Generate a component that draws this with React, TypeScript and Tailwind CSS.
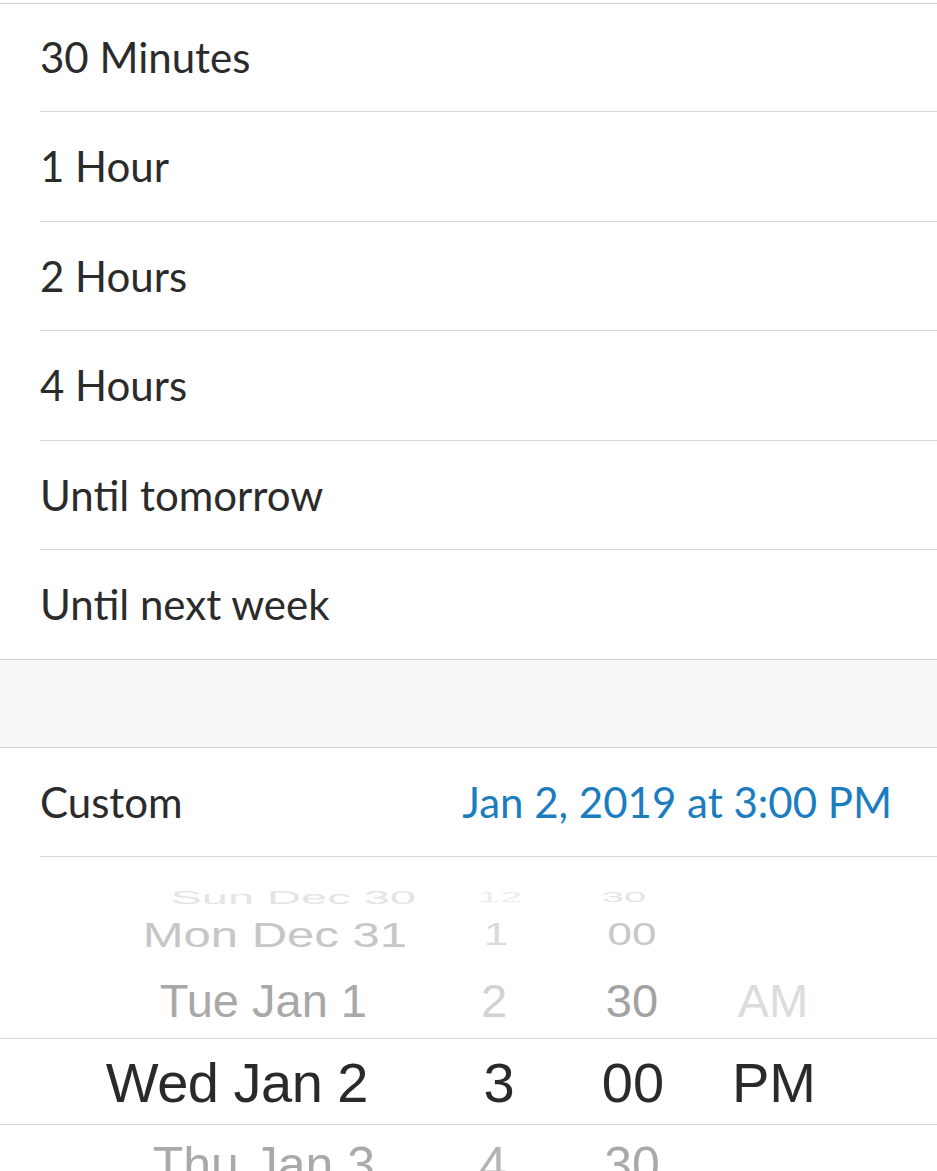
import React from "react"

const options = [
  { label: "30 Minutes", h: "h-[108px]" },
  { label: "1 Hour", h: "h-[110px]" },
  { label: "2 Hours", h: "h-[109px]" },
  { label: "4 Hours", h: "h-[110px]" },
  { label: "Until tomorrow", h: "h-[109px]" },
  { label: "Until next week", h: "h-[109px]" },
]

const lato = { fontFamily: "Lato, 'Open Sans', sans-serif" }
const helv = { fontFamily: "'Liberation Sans', Arial, sans-serif" }

export default function App() {
  return (
    <div className="w-[937px] h-[1171px] overflow-hidden bg-white" style={lato}>
      <div className="h-[3px] bg-white" />
      <div className="border-t border-[#cfcfcf]">
        {options.map((o, i) => (
          <div key={o.label} className="pl-[40px]">
            <div
              className={`${o.h} flex items-center text-[42px] text-[#2b2b2b] ${
                i < options.length - 1 ? "border-b border-[#d6d6d6]" : ""
              }`}
            >
              {o.label}
            </div>
          </div>
        ))}
      </div>

      <div className="h-[89px] bg-[#f7f7f7] border-t border-b border-[#d3d3d3]" />

      <div className="pl-[40px]">
        <div className="h-[109px] flex items-center justify-between pr-[45px] border-b border-[#d6d6d6] text-[42px]">
          <span className="text-[#2b2b2b]">Custom</span>
          <span className="text-[#1b7dbf]">Jan 2, 2019 at 3:00 PM</span>
        </div>
      </div>

      {/* wheel picker */}
      <div className="h-[315px] overflow-hidden" style={helv}>
        <div className="h-[26px]" />
        <div className="h-[28px] flex items-center text-[#e4e4e4] leading-none">
          <div className="w-[440px] pr-[24px] text-right text-[47px] scale-y-[0.38]">Sun Dec 30</div>
          <div className="w-[112px] pl-[8px] text-center text-[40px] scale-y-[0.38] text-[#ececec]">12</div>
          <div className="w-[160px] pr-[16px] text-center text-[40px] scale-y-[0.38]">30</div>
          <div className="w-[122px]" />
        </div>
        <div className="h-[48px] flex items-center leading-none">
          <div className="w-[440px] pr-[33px] text-right text-[49px] scale-y-[0.7] text-[#c6c6c6]">Mon Dec 31</div>
          <div className="w-[112px] text-center text-[44px] scale-y-[0.7] text-[#dadada]">1</div>
          <div className="w-[160px] text-center text-[44px] scale-y-[0.7] text-[#c8c8c8]">00</div>
          <div className="w-[122px]" />
        </div>
        <div className="h-[79px] pt-[4px] flex items-center leading-none">
          <div className="w-[440px] pr-[73px] text-right text-[47px] text-[#a8a8a8]">Tue Jan 1</div>
          <div className="w-[112px] pr-[4px] text-center text-[47px] text-[#d2d2d2]">2</div>
          <div className="w-[160px] text-center text-[47px] text-[#a2a2a2]">30</div>
          <div className="w-[122px] text-center text-[47px] text-[#dcdcdc]">AM</div>
        </div>
        <div className="h-[87px] pt-[2px] flex items-center leading-none border-t border-b border-[#d3d3d3] text-[#2a2a2a]">
          <div className="w-[440px] pr-[72px] text-right text-[56px] tracking-[-0.5px]">Wed Jan 2</div>
          <div className="w-[112px] pl-[6px] text-center text-[56px]">3</div>
          <div className="w-[160px] pl-[2px] text-center text-[56px]">00</div>
          <div className="w-[122px] pl-[2px] text-center text-[56px]">PM</div>
        </div>
        <div className="h-[80px] flex items-center leading-none">
          <div className="w-[440px] pr-[65px] text-right text-[50px] text-[#a9a9a9]">Thu Jan 3</div>
          <div className="w-[112px] pr-[6px] text-center text-[50px] text-[#b4b4b4]">4</div>
          <div className="w-[160px] text-center text-[50px] text-[#a9a9a9]">30</div>
          <div className="w-[122px]" />
        </div>
      </div>
    </div>
  )
}
